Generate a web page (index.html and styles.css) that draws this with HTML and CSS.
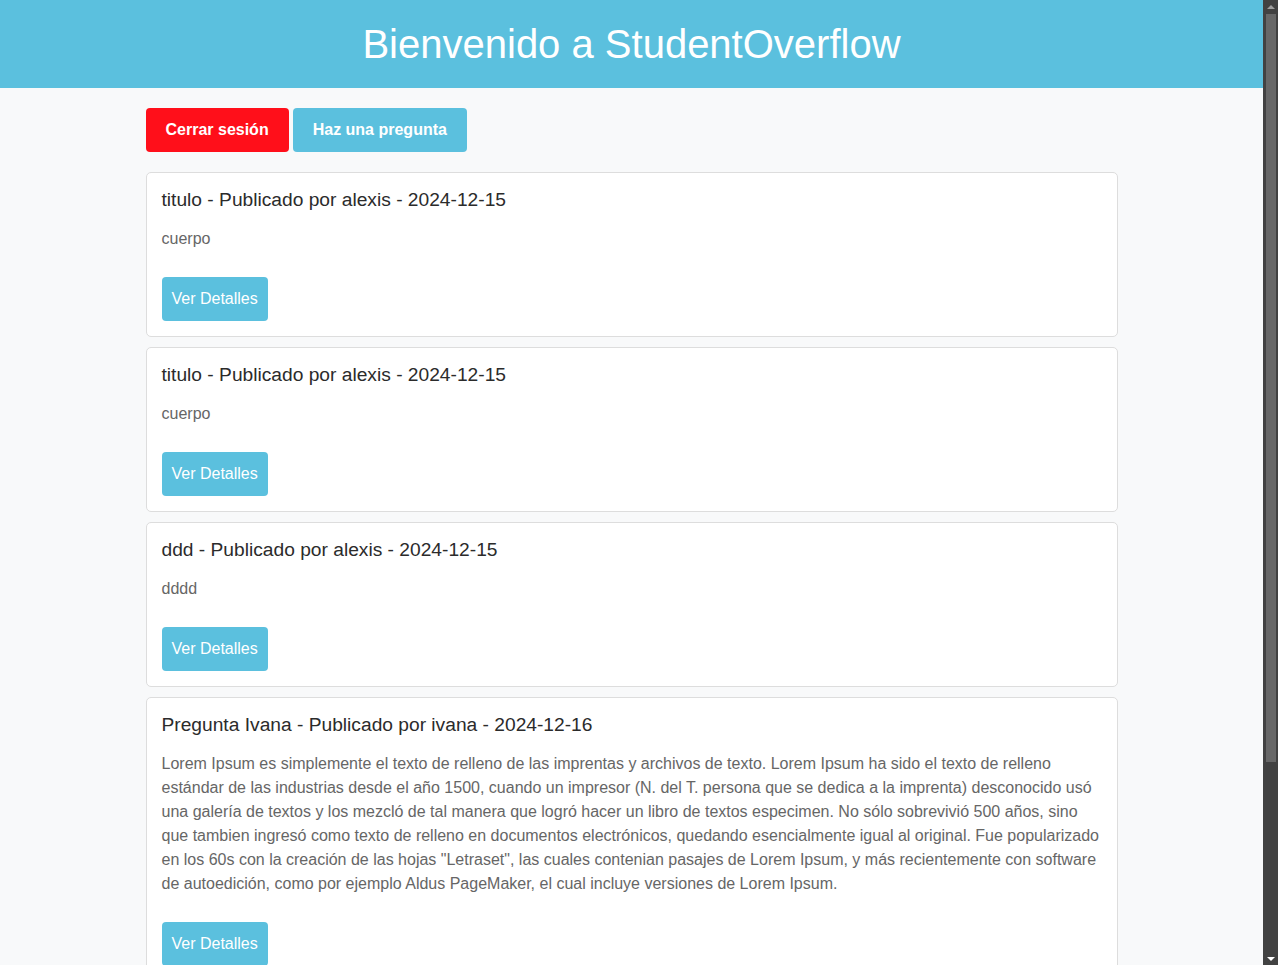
FILE: index.html
```html
<!DOCTYPE html>
<html lang="es">
<head>
<meta charset="utf-8">
<title>StudentOverflow</title>
<link rel="stylesheet" href="styles.css">
</head>
<body>
<header class="site-header">
  <h1 class="site-title">Bienvenido a StudentOverflow</h1>
</header>
<main class="container">
  <div class="actions">
    <a class="btn btn-logout" href="#">Cerrar sesión</a>
    <a class="btn btn-ask" href="#">Haz una pregunta</a>
  </div>
  <article class="card">
    <h3 class="card-title">titulo - Publicado por alexis - 2024-12-15</h3>
    <p class="card-body">cuerpo</p>
    <a class="btn-details" href="#">Ver Detalles</a>
  </article>
  <article class="card">
    <h3 class="card-title">titulo - Publicado por alexis - 2024-12-15</h3>
    <p class="card-body">cuerpo</p>
    <a class="btn-details" href="#">Ver Detalles</a>
  </article>
  <article class="card">
    <h3 class="card-title">ddd - Publicado por alexis - 2024-12-15</h3>
    <p class="card-body">dddd</p>
    <a class="btn-details" href="#">Ver Detalles</a>
  </article>
  <article class="card">
    <h3 class="card-title">Pregunta Ivana - Publicado por ivana - 2024-12-16</h3>
    <p class="card-body">Lorem Ipsum es simplemente el texto de relleno de las imprentas y archivos de texto. Lorem Ipsum ha sido el texto de relleno estándar de las industrias desde el año 1500, cuando un impresor (N. del T. persona que se dedica a la imprenta) desconocido usó una galería de textos y los mezcló de tal manera que logró hacer un libro de textos especimen. No sólo sobrevivió 500 años, sino que tambien ingresó como texto de relleno en documentos electrónicos, quedando esencialmente igual al original. Fue popularizado en los 60s con la creación de las hojas "Letraset", las cuales contenian pasajes de Lorem Ipsum, y más recientemente con software de autoedición, como por ejemplo Aldus PageMaker, el cual incluye versiones de Lorem Ipsum.</p>
    <a class="btn-details" href="#">Ver Detalles</a>
  </article>
</main>
<div class="fake-scrollbar" aria-hidden="true">
  <span class="sb-arrow sb-up"></span>
  <span class="sb-thumb"></span>
  <span class="sb-spacer"></span>
  <span class="sb-arrow sb-down"></span>
</div>
</body>
</html>
```

FILE: styles.css
```css
* { box-sizing: border-box; }

html, body {
  margin: 0;
  padding: 0;
}

body {
  background: #f8f9fa;
  font-family: "Liberation Sans", Arial, sans-serif;
  font-size: 16px;
  line-height: 1.5;
  color: #333;
  padding-right: 15px;
}

.site-header {
  background: #5bc0de;
  padding: 20px 0;
  text-align: center;
}

.site-title {
  margin: 0;
  font-size: 40px;
  font-weight: normal;
  line-height: 48px;
  color: #fff;
}

.container {
  max-width: 972px;
  margin: 0 auto;
  padding: 20px 0 228px;
}

.actions {
  display: flex;
  gap: 4px;
  margin-bottom: 20px;
}

.btn {
  display: inline-block;
  padding: 10px 20px;
  font-weight: bold;
  font-size: 16px;
  line-height: 24px;
  color: #fff;
  text-decoration: none;
  border-radius: 4px;
}

.btn-logout { background: #ff0f1a; }
.btn-ask { background: #5bc0de; }

.card {
  background: #fff;
  border: 1px solid #ddd;
  border-radius: 5px;
  padding: 15px;
  margin-bottom: 10px;
}

.card-title {
  margin: 0 0 16px;
  font-size: 19.2px;
  font-weight: normal;
  line-height: 1.2;
  color: #2b2b2b;
}

.card-body {
  margin: 0 0 26px;
  color: #666;
}

.btn-details {
  display: inline-block;
  padding: 10px;
  line-height: 24px;
  background: #5bc0de;
  color: #fff;
  text-decoration: none;
  border-radius: 4px;
}

/* decorative scrollbar overlay, as in the reference capture */
.fake-scrollbar {
  position: fixed;
  top: 0;
  right: 0;
  bottom: 0;
  width: 15px;
  background: #424242;
  display: flex;
  flex-direction: column;
  align-items: center;
}

.sb-arrow {
  flex: 0 0 14px;
  width: 15px;
  display: flex;
  align-items: center;
  justify-content: center;
}

.sb-arrow::before {
  content: "";
  width: 0;
  height: 0;
  border-left: 4px solid transparent;
  border-right: 4px solid transparent;
}

.sb-up::before {
  border-bottom: 4px solid #9e9e9e;
  margin-top: -1px;
}

.sb-down::before {
  border-top: 4px solid #ffffff;
  margin-top: 2px;
}

.sb-thumb {
  flex: 0 0 748px;
  width: 10px;
  margin-left: 1px;
  background: #686868;
}

.sb-spacer {
  flex: 1 1 auto;
}
```
